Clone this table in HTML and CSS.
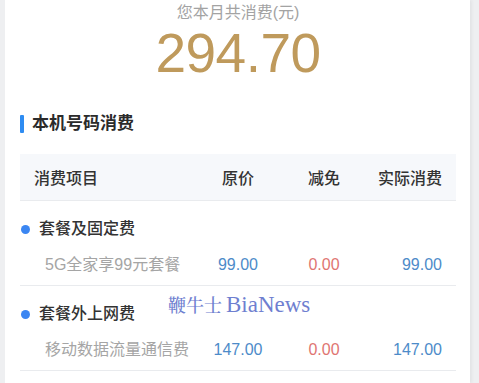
FILE: index.html
```html
<!DOCTYPE html>
<html lang="zh-CN">
<head>
<meta charset="utf-8">
<title>本机号码消费</title>
<link rel="stylesheet" href="styles.css">
</head>
<body>
<div class="card">
  <div class="summary">
    <div class="summary-label">您本月共消费(元)</div>
    <div class="summary-amount">294.70</div>
  </div>
  <div class="section-title"><span class="bar"></span>本机号码消费</div>
  <div class="table">
    <div class="row head">
      <div class="c1">消费项目</div>
      <div class="c2">原价</div>
      <div class="c3">减免</div>
      <div class="c4">实际消费</div>
    </div>
    <div class="group">
      <div class="group-title"><span class="dot"></span>套餐及固定费</div>
      <div class="row item">
        <div class="c1 sub">5G全家享99元套餐</div>
        <div class="c2 num blue">99.00</div>
        <div class="c3 num red">0.00</div>
        <div class="c4 num blue">99.00</div>
      </div>
    </div>
    <div class="group">
      <div class="group-title"><span class="dot"></span>套餐外上网费</div>
      <div class="row item">
        <div class="c1 sub">移动数据流量通信费</div>
        <div class="c2 num blue">147.00</div>
        <div class="c3 num red">0.00</div>
        <div class="c4 num blue">147.00</div>
      </div>
    </div>
  </div>
</div>
<div class="watermark"><span class="wm-cn">鞭牛士</span> <span class="wm-en">BiaNews</span></div>
</body>
</html>
```

FILE: styles.css
```css
html, body {
  margin: 0;
  padding: 0;
}
body {
  background: #eeeff1;
  font-family: "Liberation Sans", "Noto Sans CJK SC", sans-serif;
  color: #333;
  position: relative;
  height: 383px;
  overflow: hidden;
}
.card {
  margin-left: 5px;
  width: 465px;
  height: 383px;
  background: #fff;
  box-sizing: border-box;
  padding: 0 14px 0 15px;
  box-shadow: 2px 0 3px rgba(0, 0, 0, 0.05);
}
.summary {
  padding-top: 2px;
  text-align: center;
}
.summary-label {
  font-size: 16px;
  line-height: 22px;
  color: #a3a3a3;
}
.summary-amount {
  margin-top: -1px;
  font-size: 55px;
  line-height: 60px;
  color: #bf9a5c;
  letter-spacing: -0.5px;
}
.section-title {
  margin-top: 29px;
  display: flex;
  align-items: center;
  gap: 8px;
  font-size: 17px;
  line-height: 24px;
  font-weight: 700;
  color: #2b2b2b;
}
.bar {
  width: 4px;
  height: 18px;
  background: #2e8cf2;
  border-radius: 1px;
}
.table {
  margin-top: 18px;
}
.row {
  display: grid;
  grid-template-columns: 160px 88px 84px 76px;
  padding: 0 14px;
  align-items: center;
}
.head {
  height: 46px;
  background: #f6f8fb;
  border-bottom: 1px solid #e9ebee;
  font-size: 16px;
  font-weight: 500;
  color: #333;
}
.c2, .c3 {
  text-align: center;
}
.c4 {
  text-align: right;
}
.group {
  padding: 16px 0 8px;
  border-bottom: 1px solid #e9ebee;
}
.group-title {
  display: flex;
  align-items: center;
  gap: 9px;
  padding-left: 1px;
  font-size: 16px;
  line-height: 24px;
  font-weight: 500;
  color: #333;
}
.dot {
  width: 9px;
  height: 9px;
  border-radius: 50%;
  background: #3b86f2;
}
.item {
  margin-top: 12px;
  line-height: 24px;
  font-size: 16px;
}
.sub {
  padding-left: 11px;
  color: #a5a5a5;
  white-space: nowrap;
}
.num {
  font-size: 16px;
}
.blue {
  color: #4d8bc9;
}
.red {
  color: #e07572;
}
.watermark {
  position: absolute;
  left: 168px;
  top: 293px;
  color: #6f7fd0;
  font-family: "Liberation Serif", "Noto Serif CJK SC", "Noto Sans CJK SC", serif;
  line-height: 24px;
  white-space: nowrap;
}
.wm-cn {
  font-size: 18px;
  font-weight: 500;
}
.wm-en {
  font-size: 23px;
}
```
